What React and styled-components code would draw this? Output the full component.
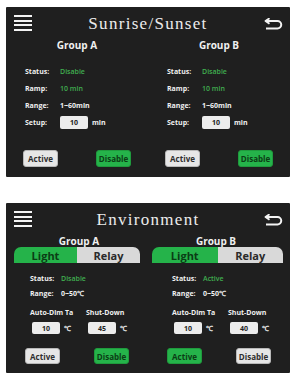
import React from 'react';
import styled, { createGlobalStyle } from 'styled-components';

const GlobalStyle = createGlobalStyle`
  body {
    margin: 0;
    background: #ffffff;
    font-family: "Open Sans", "Liberation Sans", sans-serif;
  }
`;

const Page = styled.div`
  display: flex;
  flex-direction: column;
  gap: 26px;
  padding: 7px 0 0 6px;
  width: 299px;
  box-sizing: border-box;
`;

const Panel = styled.section`
  width: 284px;
  background: #1f1f1f;
  border-radius: 1px;
  padding-bottom: ${(p) => p.$bottom}px;
  color: #f2f2f2;
`;

const Header = styled.header`
  display: grid;
  grid-template-columns: 40px 1fr 40px;
  align-items: center;
  height: 32px;
`;

const Title = styled.h1`
  margin: 0;
  text-align: center;
  font-family: "Liberation Serif", serif;
  font-weight: normal;
  font-size: 17px;
  letter-spacing: 1.3px;
  color: #ececec;
  padding-top: 2px;
`;

const Burger = styled.div`
  display: flex;
  flex-direction: column;
  gap: 2.5px;
  margin-left: 8px;
  span {
    display: block;
    width: 18px;
    height: 2px;
    background: #f4f4f4;
  }
`;

const BackWrap = styled.div`
  display: flex;
  justify-content: flex-end;
  padding-right: 7px;
  padding-top: 3px;
`;

const Columns = styled.div`
  display: grid;
  grid-template-columns: 1fr 1fr;
`;

const Column = styled.div`
  display: flex;
  flex-direction: column;
`;

const GroupName = styled.div`
  text-align: center;
  font-weight: 700;
  font-size: 10px;
  line-height: 12px;
  color: #f0f0f0;
  margin-left: ${(p) => p.$shift || 0}px;
`;

const Toggle = styled.div`
  display: flex;
  height: 16px;
  margin: 0 ${(p) => p.$right}px 0 ${(p) => p.$left}px;
  border-radius: 7px 7px 0 0;
  overflow: hidden;
`;

const ToggleHalf = styled.div`
  flex: 1;
  display: flex;
  align-items: center;
  justify-content: center;
  font-weight: 700;
  font-size: 11px;
  background: ${(p) => (p.$on ? '#25b34a' : '#d9d9d9')};
  color: ${(p) => (p.$on ? '#0b3d15' : '#2a2a2a')};
`;

const Rows = styled.div`
  display: flex;
  flex-direction: column;
  margin-top: ${(p) => p.$top}px;
  padding-left: ${(p) => p.$left}px;
`;

const Row = styled.div`
  display: flex;
  align-items: center;
  height: ${(p) => p.$h}px;
  font-size: 7px;
  font-weight: 700;
`;

const Label = styled.span`
  width: ${(p) => p.$w || 35}px;
  color: #f0f0f0;
  flex-shrink: 0;
`;

const Value = styled.span`
  color: ${(p) => (p.$green ? '#3fae4f' : '#f0f0f0')};
  font-weight: ${(p) => (p.$green ? 600 : 700)};
`;

const Field = styled.span`
  display: inline-flex;
  align-items: center;
  justify-content: center;
  width: 28px;
  height: ${(p) => p.$h || 13}px;
  background: #ececec;
  border-radius: 2px;
  color: #222;
  font-size: 7px;
  font-weight: 700;
  margin-right: 4px;
`;

const Unit = styled.span`
  color: #f0f0f0;
  font-size: 7px;
  font-weight: 700;
`;

const Pair = styled.div`
  display: grid;
  grid-template-columns: 56px 56px;
  margin-top: 6px;
  padding-left: ${(p) => p.$left}px;
  font-size: 7px;
  font-weight: 700;
  row-gap: 3px;
`;

const PairLabel = styled.span`
  line-height: 12px;
  color: #f0f0f0;
`;

const PairField = styled.div`
  display: flex;
  align-items: center;
  padding-left: 2px;
`;

const Buttons = styled.div`
  display: flex;
  justify-content: space-between;
  margin-top: ${(p) => p.$top}px;
  padding: 0 ${(p) => p.$pad}px;
`;

const Btn = styled.button`
  width: 35px;
  height: ${(p) => p.$h}px;
  padding: 0;
  border-radius: 3px;
  font-family: "Open Sans", "Liberation Sans", sans-serif;
  font-size: 8px;
  font-weight: 700;
  border: 1px solid ${(p) => (p.$green ? '#1f9a3d' : '#b8b8b8')};
  background: ${(p) => (p.$green ? '#25b34a' : '#e6e6e6')};
  color: ${(p) => (p.$green ? '#0b3d15' : '#2e2e2e')};
`;

const BackIcon = () => (
  <svg width="20" height="13" viewBox="0 0 20 13" fill="none">
    <path d="M3 3 H14.5 a3.75 3.75 0 0 1 0 7.5 H3" stroke="#f4f4f4" strokeWidth="2" />
    <path d="M6.5 0.2 L2.5 3 L6.5 5.8" stroke="#f4f4f4" strokeWidth="1.8" strokeLinejoin="round" />
  </svg>
);

const TopBar = ({ title }) => (
  <Header>
    <Burger>
      <span />
      <span />
      <span />
      <span />
    </Burger>
    <Title>{title}</Title>
    <BackWrap>
      <BackIcon />
    </BackWrap>
  </Header>
);

const SunGroup = ({ name }) => (
  <Column>
    <GroupName>{name}</GroupName>
    <Rows $top={12} $left={19}>
      <Row $h={17}>
        <Label>Status:</Label>
        <Value $green>Disable</Value>
      </Row>
      <Row $h={17}>
        <Label>Ramp:</Label>
        <Value $green>10 min</Value>
      </Row>
      <Row $h={17}>
        <Label>Range:</Label>
        <Value>1~60min</Value>
      </Row>
      <Row $h={17}>
        <Label>Setup:</Label>
        <Field>10</Field>
        <Unit>min</Unit>
      </Row>
    </Rows>
    <Buttons $top={19} $pad={17}>
      <Btn $h={17}>Active</Btn>
      <Btn $h={17} $green>Disable</Btn>
    </Buttons>
  </Column>
);

const EnvGroup = ({ name, status, active, shut, side }) => (
  <Column>
    <GroupName $shift={side === 'b' ? -6 : 4}>{name}</GroupName>
    <Toggle $left={side === 'b' ? 4 : 8} $right={side === 'b' ? 7 : 8}>
      <ToggleHalf $on>Light</ToggleHalf>
      <ToggleHalf>Relay</ToggleHalf>
    </Toggle>
    <Rows $top={8} $left={24}>
      <Row $h={15}>
        <Label $w={31}>Status:</Label>
        <Value $green>{status}</Value>
      </Row>
      <Row $h={15}>
        <Label $w={31}>Range:</Label>
        <Value>0~50℃</Value>
      </Row>
    </Rows>
    <Pair $left={24}>
      <PairLabel>Auto-Dim Ta</PairLabel>
      <PairLabel>Shut-Down</PairLabel>
      <PairField>
        <Field $h={12}>10</Field>
        <Unit>℃</Unit>
      </PairField>
      <PairField>
        <Field $h={12}>{shut}</Field>
        <Unit>℃</Unit>
      </PairField>
    </Pair>
    <Buttons $top={14} $pad={19}>
      <Btn $h={16} $green={active}>Active</Btn>
      <Btn $h={16} $green={!active}>Disable</Btn>
    </Buttons>
  </Column>
);

export default function App() {
  return (
    <>
      <GlobalStyle />
      <Page>
        <Panel $bottom={10}>
          <TopBar title="Sunrise/Sunset" />
          <Columns>
            <SunGroup name="Group A" />
            <SunGroup name="Group B" />
          </Columns>
        </Panel>
        <Panel $bottom={9}>
          <TopBar title="Environment" />
          <Columns>
            <EnvGroup name="Group A" status="Disable" active={false} shut="45" side="a" />
            <EnvGroup name="Group B" status="Active" active shut="40" side="b" />
          </Columns>
        </Panel>
      </Page>
    </>
  );
}
